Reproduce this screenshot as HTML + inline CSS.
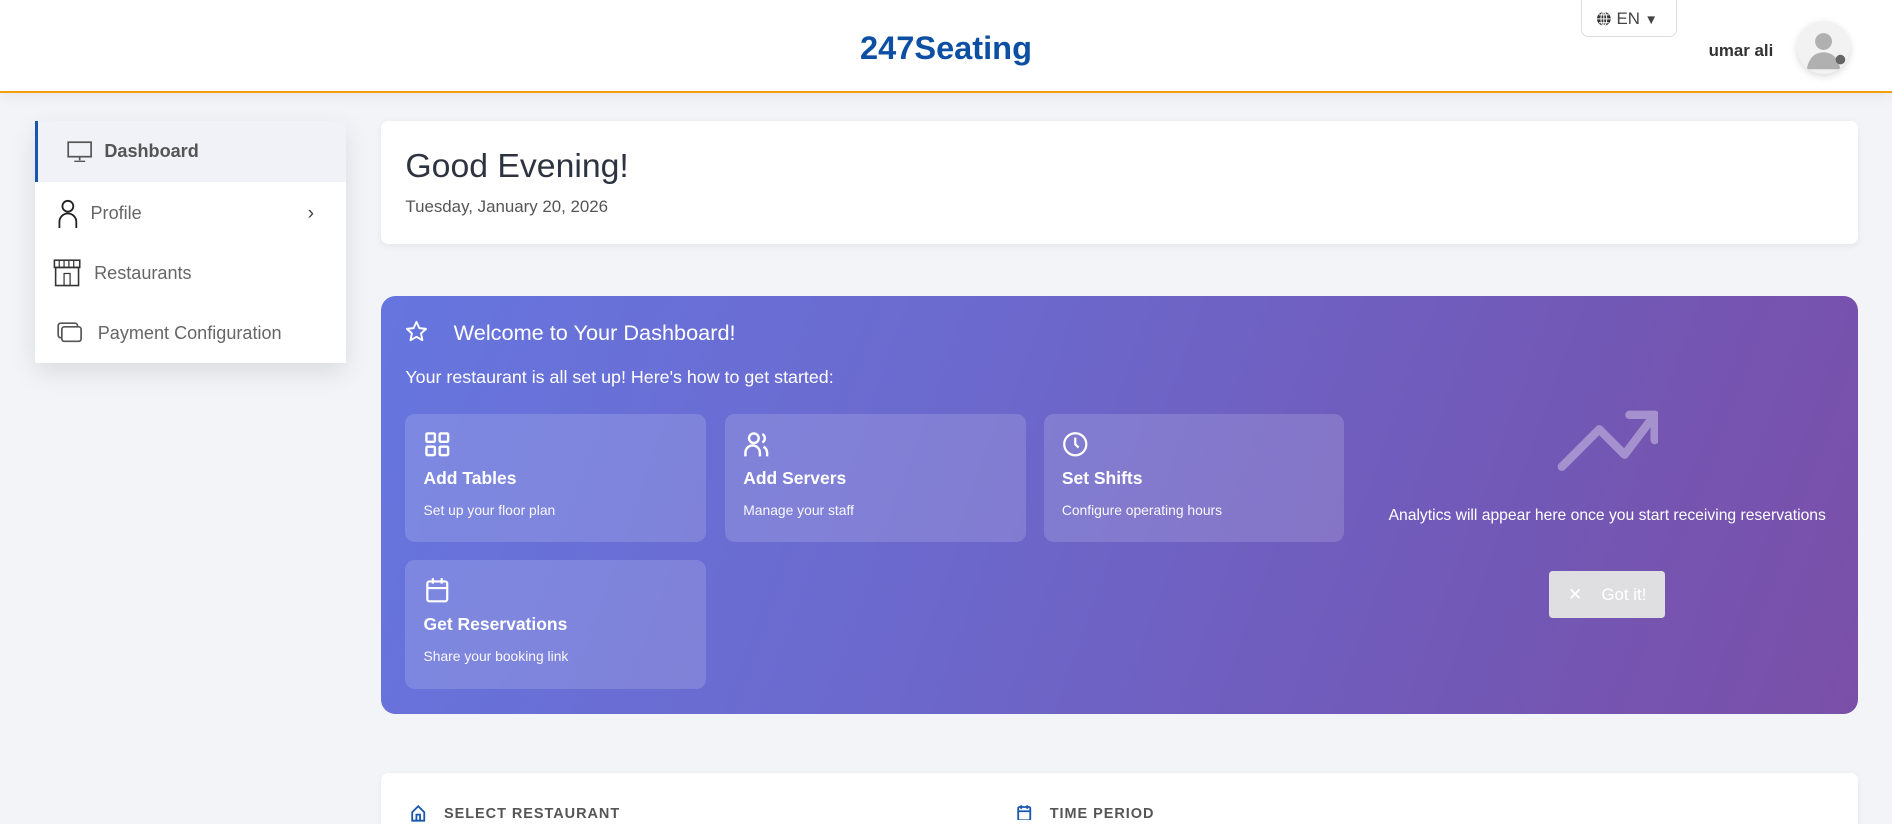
<!DOCTYPE html>
<html><head><meta charset="utf-8"><style>
*{box-sizing:border-box;margin:0;padding:0}
html,body{width:1892px;height:824px;overflow:hidden;background:#f3f4f8;font-family:"Liberation Sans",sans-serif}
#w{width:1568px;height:683px;zoom:1.20663;position:relative;background:#f3f4f8}
.a{position:absolute}
.hdr{left:0;top:0;width:1568px;height:77px;background:#fff;border-bottom:2px solid #f59e0b;box-shadow:0 4px 10px rgba(0,0,0,.05)}
.logo{left:0;width:1568px;top:25px;text-align:center;font-size:27px;font-weight:bold;color:#0d4fa3}
.en{left:1310px;top:-1px;width:80px;height:32px;border:1px solid #ddd;border-radius:0 0 6px 6px;background:#fff;font-size:14px;color:#444;padding:8px 0 0 12px}
.user{left:1416px;top:34px;font-size:14px;font-weight:bold;color:#333}
.av{left:1489px;top:17px;width:44px;height:44px;border-radius:50%;background:#f2f2f2;box-shadow:0 2px 6px rgba(0,0,0,.15);overflow:hidden}
.side{left:29px;top:100px;width:258px;height:201px;background:#fff;box-shadow:0 8px 20px rgba(0,0,0,.1)}
.it{position:absolute;left:0;width:258px;height:50px;font-size:15px;color:#666;display:flex;align-items:center}
.card{background:#fff;border-radius:6px;box-shadow:0 2px 6px rgba(0,0,0,.06)}
.grad{left:316px;top:245px;width:1224px;height:347px;border-radius:12px;background:linear-gradient(110deg,#6676df 0%,#6c68cc 40%,#7258b6 75%,#7a4fa8 100%);color:#fff}
.tile{position:absolute;width:249px;background:rgba(255,255,255,.15);border-radius:8px;padding:14px 15px}
.tile svg{display:block;height:22px}
.tile b{display:block;font-size:14.5px;margin-top:9px}
.tile span{display:block;font-size:11.5px;margin-top:11px;opacity:.95}
.lbl{font-size:12px;font-weight:bold;color:#555;letter-spacing:.8px}
</style></head><body><div id="w">
<div class="a hdr"></div>
<div class="a logo">247Seating</div>
<div class="a en"><svg width="13" height="13" viewBox="0 0 16 16" style="vertical-align:-2px"><circle cx="8" cy="8" r="7" fill="#333"/><path d="M1 8h14M8 1v14M3 4h10M3 12h10" stroke="#fff" stroke-width="1"/><ellipse cx="8" cy="8" rx="3" ry="7" fill="none" stroke="#fff"/></svg> EN <span style="font-size:11px">▼</span></div>
<div class="a user">umar ali</div>
<div class="a av"><svg width="44" height="44" viewBox="0 0 44 44"><circle cx="22" cy="17" r="7" fill="#b0b0b0"/><path d="M8 40c2-10 7-14 14-14s12 4 14 14z" fill="#b0b0b0"/><circle cx="36" cy="32" r="4" fill="#666"/></svg></div>

<div class="a side">
 <div class="it" style="top:0;height:51px;background:#f0f2f7;border-left:3px solid #1a56b0;font-weight:bold;color:#555"><svg style="margin:0 10px 0 24px" width="21" height="18" viewBox="0 0 21 18"><rect x="1" y="1" width="19" height="12" fill="none" stroke="#555" stroke-width="1.4"/><path d="M10.5 13v3M6 17h9" stroke="#555" stroke-width="1.4"/></svg>Dashboard</div>
 <div class="it" style="top:52px"><svg style="margin:0 10px 0 18px" width="18" height="24" viewBox="0 0 18 24"><circle cx="9" cy="6" r="4.5" fill="none" stroke="#222" stroke-width="1.5"/><path d="M2 24v-5a7 7 0 0 1 14 0v5" fill="none" stroke="#222" stroke-width="1.5"/></svg>Profile<span style="position:absolute;left:226px;font-size:16px;color:#444">›</span></div>
 <div class="it" style="top:102px"><svg style="margin:0 10px 0 14px" width="25" height="24" viewBox="0 0 25 24"><rect x="2" y="1" width="21" height="6" fill="none" stroke="#333" stroke-width="1.3"/><path d="M6 1v6M10 1v6M14 1v6M18 1v6" stroke="#333"/><rect x="3" y="7" width="19" height="15" fill="none" stroke="#333" stroke-width="1.3"/><rect x="10" y="12" width="5" height="10" fill="none" stroke="#333"/></svg>Restaurants</div>
 <div class="it" style="top:151px"><svg style="margin:0 13px 0 18px" width="21" height="18" viewBox="0 0 21 18"><rect x="1" y="1" width="16" height="12" rx="2" fill="none" stroke="#555" stroke-width="1.4"/><rect x="4" y="4" width="16" height="12" rx="2" fill="#fff" stroke="#555" stroke-width="1.4"/></svg>Payment Configuration</div>
</div>

<div class="a card" style="left:316px;top:100px;width:1224px;height:102px">
 <div class="a" style="left:20px;top:22px;font-size:28px;color:#2d3340">Good Evening!</div>
 <div class="a" style="left:20px;top:63px;font-size:14px;color:#555">Tuesday, January 20, 2026</div>
</div>

<div class="a grad">
 <svg class="a" style="left:20px;top:20px" width="19" height="19" viewBox="0 0 24 24"><path d="M12 2l3 6.5 7 .8-5.2 4.8 1.4 7L12 17.6 5.8 21.1l1.4-7L2 9.3l7-.8z" fill="none" stroke="#fff" stroke-width="2" stroke-linejoin="round"/></svg>
 <div class="a" style="left:60px;top:20px;font-size:18px">Welcome to Your Dashboard!</div>
 <div class="a" style="left:20px;top:59px;font-size:14.8px">Your restaurant is all set up! Here's how to get started:</div>
 <div class="tile" style="left:20px;top:98px;height:106px"><svg width="22" height="22" viewBox="0 0 22 22" fill="none" stroke="#fff" stroke-width="2"><rect x="2" y="2" width="7" height="7" rx="1"/><rect x="13" y="2" width="7" height="7" rx="1"/><rect x="2" y="13" width="7" height="7" rx="1"/><rect x="13" y="13" width="7" height="7" rx="1"/></svg><b>Add Tables</b><span>Set up your floor plan</span></div>
 <div class="tile" style="left:285px;top:98px;height:106px"><svg width="26" height="22" viewBox="0 0 26 22" fill="none" stroke="#fff" stroke-width="2"><circle cx="9" cy="6" r="4"/><path d="M2 21v-3a6 6 0 0 1 12 0v3M16 2.5a4 4 0 0 1 0 7M20 21v-3a6 6 0 0 0-3-5"/></svg><b>Add Servers</b><span>Manage your staff</span></div>
 <div class="tile" style="left:549px;top:98px;height:106px"><svg width="22" height="22" viewBox="0 0 24 24" fill="none" stroke="#fff" stroke-width="2"><circle cx="12" cy="12" r="10"/><path d="M12 6v6l3 3"/></svg><b>Set Shifts</b><span>Configure operating hours</span></div>
 <div class="tile" style="left:20px;top:219px;height:107px"><svg width="22" height="22" viewBox="0 0 22 24" fill="none" stroke="#fff" stroke-width="2"><rect x="2" y="4" width="18" height="18" rx="2"/><path d="M7 1v5M15 1v5M2 10h18"/></svg><b>Get Reservations</b><span>Share your booking link</span></div>
 <svg class="a" style="left:974px;top:95px" width="84" height="52" viewBox="0 0 84 52" fill="none" stroke="rgba(255,255,255,.35)" stroke-width="7" stroke-linecap="round" stroke-linejoin="round"><path d="M4 47l31-31 21 21 25-33M60 4h21v21"/></svg>
 <div class="a" style="left:816px;width:400px;text-align:center;top:175px;font-size:13px">Analytics will appear here once you start receiving reservations</div>
 <div class="a" style="left:968px;top:228px;width:96px;height:39px;background:#dfdfe2;border-radius:3px;font-size:14px;padding-top:11px;text-align:center"><span style="margin-right:16px">✕</span>Got it!</div>
</div>

<div class="a card" style="left:316px;top:641px;width:1224px;height:60px">
 <svg class="a" style="left:25px;top:26px" width="12" height="14" viewBox="0 0 12 14" fill="none" stroke="#1a56b0" stroke-width="1.5"><path d="M1 13V6l5-5 5 5v7zM4.5 13V8h3v5"/></svg>
 <div class="a lbl" style="left:52px;top:27px">SELECT RESTAURANT</div>
 <svg class="a" style="left:527px;top:25px" width="12" height="14" viewBox="0 0 12 14" fill="none" stroke="#1a56b0" stroke-width="1.5"><rect x="1" y="2.5" width="10" height="11" rx="1"/><path d="M3.5 1v3M8.5 1v3M1 6h10"/></svg>
 <div class="a lbl" style="left:554px;top:27px">TIME PERIOD</div>
</div>
</div></body></html>
